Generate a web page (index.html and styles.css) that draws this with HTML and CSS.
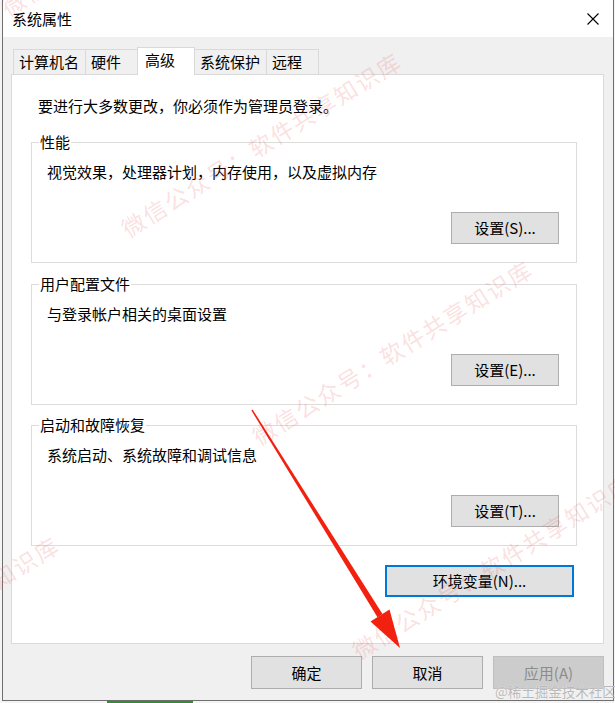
FILE: index.html
```html
<!DOCTYPE html>
<html lang="zh-CN">
<head>
<meta charset="utf-8">
<title>系统属性</title>
<link rel="stylesheet" href="styles.css">
</head>
<body>
<div class="dialog">
  <div class="titlebar">
    <span class="title">系统属性</span>
    <svg class="close" width="12" height="12" viewBox="0 0 12 12"><path d="M0.5 0.5 L11.5 11.5 M11.5 0.5 L0.5 11.5" stroke="#000" stroke-width="1.1" fill="none"/></svg>
  </div>
  <div class="tabs">
    <div class="tab">计算机名</div>
    <div class="tab">硬件</div>
    <div class="tab active">高级</div>
    <div class="tab">系统保护</div>
    <div class="tab">远程</div>
  </div>
  <div class="panel">
    <p class="intro">要进行大多数更改，你必须作为管理员登录。</p>
    <div class="group">
      <div class="legend">性能</div>
      <p class="desc">视觉效果，处理器计划，内存使用，以及虚拟内存</p>
      <button class="btn btn-set">设置(S)...</button>
    </div>
    <div class="group">
      <div class="legend">用户配置文件</div>
      <p class="desc">与登录帐户相关的桌面设置</p>
      <button class="btn btn-set">设置(E)...</button>
    </div>
    <div class="group group-last">
      <div class="legend">启动和故障恢复</div>
      <p class="desc">系统启动、系统故障和调试信息</p>
      <button class="btn btn-set">设置(T)...</button>
    </div>
    <button class="btn btn-env">环境变量(N)...</button>
  </div>
  <div class="footer">
    <button class="btn btn-lg">确定</button>
    <button class="btn btn-lg">取消</button>
    <button class="btn btn-lg" disabled>应用(A)</button>
  </div>
</div>
<div class="taskbar-sliver"></div>

<div class="wm-layer">
  <span class="wm wm1">微信公众号：软件共享知识库</span>
  <span class="wm wm2">微信公众号：软件共享知识库</span>
  <span class="wm wm3">微信公众号：软件共享知识库</span>
  <span class="wm wm4">微信公众号：软件共享知识库</span>
  <span class="wm wm5">微信公众号：软件共享知识库</span>
</div>

<svg class="arrow" width="615" height="703" viewBox="0 0 615 703">
  <polygon points="252.6,409.6 382.5,614.1 377.5,617.3 251.4,410.4" fill="#f2200f"/>
  <polygon points="400,648 389.5,609.5 370.5,621.5" fill="#f2200f"/>
</svg>

<div class="juejin">@稀土掘金技术社区</div>
</body>
</html>
```

FILE: styles.css
```css
* { box-sizing: border-box; }

html, body {
  margin: 0;
  padding: 0;
}

body {
  width: 615px;
  height: 703px;
  overflow: hidden;
  position: relative;
  background: #f4f4f4;
  font-family: "Noto Sans CJK SC", "Noto Sans", "Liberation Sans", sans-serif;
  font-size: 15px;
  color: #000;
}

.dialog {
  margin-left: 2px;
  width: 612px;
  height: 701px;
  background: #f0f0f0;
  border: 1px solid #6f6f6f;
  border-top: none;
  display: flex;
  flex-direction: column;
}

.titlebar {
  height: 37px;
  flex: none;
  background: #fff;
  display: flex;
  align-items: center;
  justify-content: space-between;
  padding: 0 14px 0 9px;
}

.title {
  line-height: 20px;
}

.close {
  display: block;
}

.tabs {
  margin-top: 10px;
  padding-left: 10px;
  height: 27px;
  display: flex;
  align-items: flex-end;
  flex: none;
}

.tab {
  height: 25px;
  min-width: 53px;
  padding: 0 6px 0 5px;
  border: 1px solid #d9d9d9;
  border-bottom: none;
  background: #f0f0f0;
  line-height: 24px;
  white-space: nowrap;
  margin-left: -1px;
}

.tab:first-child {
  margin-left: 0;
}

.tab.active {
  height: 28px;
  min-width: 58px;
  padding: 0 7px;
  margin-bottom: -1px;
  background: #fff;
  position: relative;
  z-index: 1;
  line-height: 24px;
}

.panel {
  margin-left: 8px;
  width: 593px;
  height: 570px;
  flex: none;
  background: #fff;
  border: 1px solid #d9d9d9;
  padding: 21px 26px 0 19px;
  display: flex;
  flex-direction: column;
}

.intro {
  margin: 0 0 0 7px;
  line-height: 20px;
}

.group {
  margin-top: 21px;
  border: 1px solid #dcdcdc;
  padding: 0 17px 18px 0;
  display: flex;
  flex-direction: column;
}

.intro + .group {
  margin-top: 26px;
}

.group-last {
  margin-top: 20px;
}

.legend {
  align-self: flex-start;
  margin: -11px 0 0 7px;
  padding: 0 1px;
  background: #fff;
  line-height: 20px;
}

.desc {
  margin: 10px 0 0 15px;
  line-height: 20px;
}

.btn {
  font-family: inherit;
  font-size: 15px;
  color: #000;
  background: #e1e1e1;
  border: 1px solid #adadad;
  border-radius: 0;
  padding: 0;
  margin: 0;
  line-height: 20px;
}

.btn-set {
  align-self: flex-end;
  margin-top: 30px;
  width: 108px;
  height: 32px;
}

.btn-env {
  align-self: flex-end;
  margin: 19px 3px 0 0;
  width: 189px;
  height: 32px;
  border: 2px solid #0078d7;
}

.footer {
  margin-top: 12px;
  padding-right: 9px;
  display: flex;
  justify-content: flex-end;
  gap: 10px;
}

.btn-lg {
  width: 111px;
  height: 33px;
}

.btn[disabled] {
  background: #cccccc;
  border-color: #bfbfbf;
  color: #8c8c8c;
}

.taskbar-sliver {
  margin-left: 107px;
  width: 86px;
  height: 2px;
  background: #2f8f35;
}

.wm-layer {
  position: absolute;
  left: 0;
  top: 0;
  width: 615px;
  height: 703px;
  overflow: hidden;
  pointer-events: none;
}

.wm {
  position: absolute;
  white-space: nowrap;
  font-size: 23px;
  letter-spacing: 2px;
  color: rgba(235, 70, 70, 0.18);
  transform: translate(-50%, -50%) rotate(-32deg);
}

.wm1 { left: 261px; top: 144px; }
.wm2 { left: 392px; top: 352px; }
.wm3 { left: 492px; top: 566px; }
.wm4 { left: -81px; top: 628px; }
.wm5 { left: 141px; top: -77px; }

.arrow {
  position: absolute;
  left: 0;
  top: 0;
  pointer-events: none;
}

.juejin {
  position: absolute;
  left: 495px;
  top: 682px;
  font-size: 13.5px;
  line-height: 18px;
  color: #b9b9b9;
  text-shadow: 0 0 1px #fff;
  white-space: nowrap;
}
```
